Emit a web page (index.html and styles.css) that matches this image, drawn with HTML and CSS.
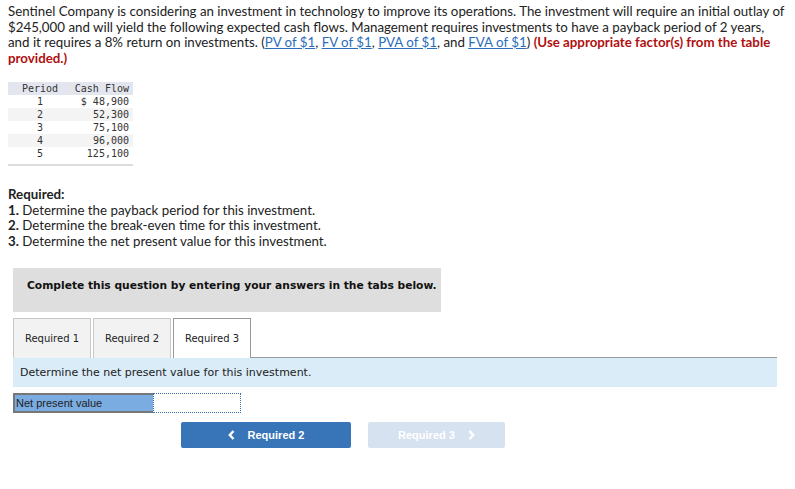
FILE: index.html
```html
<!DOCTYPE html>
<html>
<head>
<meta charset="utf-8">
<link rel="stylesheet" href="styles.css">
</head>
<body>
<div class="page">
  <p class="intro">Sentinel Company is considering an investment in technology to improve its operations. The investment will require an initial outlay of<br>$245,000 and will yield the following expected cash flows. Management requires investments to have a payback period of 2 years,<br>and it requires a 8% return on investments. (<a href="#">PV of $1</a>, <a href="#">FV of $1</a>, <a href="#">PVA of $1</a>, and <a href="#">FVA of $1</a>) <strong class="red">(Use appropriate factor(s) from the table<br>provided.)</strong></p>

  <table class="cf">
    <thead>
      <tr><th class="per">Period</th><th class="amt">Cash Flow</th></tr>
    </thead>
    <tbody>
      <tr><td class="per">1</td><td class="amt">$ 48,900</td></tr>
      <tr class="alt"><td class="per">2</td><td class="amt">52,300</td></tr>
      <tr><td class="per">3</td><td class="amt">75,100</td></tr>
      <tr class="alt"><td class="per">4</td><td class="amt">96,000</td></tr>
      <tr><td class="per">5</td><td class="amt">125,100</td></tr>
    </tbody>
  </table>

  <div class="req">
    <div class="req-title">Required:</div>
    <div><b>1.</b> Determine the payback period for this investment.</div>
    <div><b>2.</b> Determine the break-even time for this investment.</div>
    <div><b>3.</b> Determine the net present value for this investment.</div>
  </div>

  <div class="notice">Complete this question by entering your answers in the tabs below.</div>

  <div class="tabs">
    <div class="tab">Required 1</div>
    <div class="tab">Required 2</div>
    <div class="tab active">Required 3</div>
    <div class="tab-fill"></div>
  </div>
  <div class="prompt">Determine the net present value for this investment.</div>

  <div class="answer">
    <div class="label">Net present value</div>
    <div class="input"></div>
  </div>

  <div class="nav">
    <button class="btn prev"><svg class="chev left" width="7" height="10" viewBox="0 0 7 10"><polyline points="5.5,1 1.8,5 5.5,9" fill="none" stroke="#fff" stroke-width="2.4"/></svg>Required 2</button>
    <button class="btn next">Required 3<svg class="chev right" width="7" height="10" viewBox="0 0 7 10"><polyline points="1.5,1 5.2,5 1.5,9" fill="none" stroke="#fff" stroke-width="2.4"/></svg></button>
  </div>
</div>
</body>
</html>
```

FILE: styles.css
```css
html, body {
  margin: 0;
  padding: 0;
  background: #fff;
}
.page {
  padding: 4px 8px 0 8px;
  font-family: "Lato", "Liberation Sans", sans-serif;
  color: #222;
}
.intro {
  margin: 0;
  font-size: 13.3px;
  line-height: 15.5px;
}
.intro a {
  color: #2a6ebb;
  text-decoration: underline;
}
.red {
  color: #b01010;
  font-weight: 700;
}
.cf {
  margin-top: 16px;
  border-collapse: collapse;
  font-family: "DejaVu Sans Mono", "Liberation Mono", monospace;
  font-size: 10px;
  color: #333;
  border-bottom: 2px solid #ddd;
}
.cf th {
  background: #e3e6ee;
  font-weight: normal;
  height: 13px;
  padding: 0;
  line-height: 13px;
}
.cf td {
  height: 13px;
  padding: 0;
  line-height: 13px;
}
.cf tbody tr:last-child td {
  padding-bottom: 4px;
}
.cf .per {
  text-align: center;
  width: 56px;
  padding-left: 4px;
}
.cf .amt {
  text-align: right;
  width: 61px;
  padding-right: 4px;
}
.cf .alt td {
  background: #f4f4f4;
}
.req {
  margin-top: 21px;
  font-size: 13.3px;
  line-height: 15.5px;
}
.req-title {
  font-weight: 700;
}
.notice {
  margin: 19px 0 0 5px;
  width: 428px;
  height: 44px;
  box-sizing: border-box;
  padding: 11px 0 0 14px;
  background: #dedede;
  font-family: "DejaVu Sans", Verdana, sans-serif;
  font-weight: 700;
  font-size: 10.7px;
  white-space: nowrap;
  color: #111;
}
.tabs {
  margin: 6px 0 0 5px;
  display: flex;
  align-items: flex-end;
  width: 764px;
}
.tab {
  width: 76px;
  height: 39px;
  box-sizing: content-box;
  border: 1px solid #c8c8c8;
  border-bottom: none;
  background: #f2f2f2;
  margin-right: 2px;
  display: flex;
  align-items: center;
  justify-content: center;
  font-family: "DejaVu Sans", Verdana, sans-serif;
  font-size: 10px;
  color: #222;
}
.tab.active {
  background: #fff;
  border-color: #999;
  margin-right: 0;
}
.tab-fill {
  flex: 1;
  border-bottom: 1px solid #999;
}
.prompt {
  margin-left: 5px;
  width: 764px;
  height: 29px;
  box-sizing: border-box;
  padding-left: 7px;
  background: #d9ecf8;
  display: flex;
  align-items: center;
  font-family: "DejaVu Sans", Verdana, sans-serif;
  font-size: 11px;
  color: #222;
}
.answer {
  margin: 6px 0 0 5px;
  display: flex;
  height: 20px;
}
.label {
  width: 140px;
  box-sizing: border-box;
  border: 2px solid #777;
  border-right: none;
  background: #7aace2;
  font-family: "Liberation Sans", Arial, sans-serif;
  font-size: 11px;
  line-height: 16px;
  padding-left: 1px;
  color: #222;
}
.input {
  width: 88px;
  box-sizing: border-box;
  border: 1px dotted #3a6ea8;
  background: #fff;
}
.nav {
  margin-top: 9px;
  display: flex;
  padding-left: 173px;
}
.btn {
  height: 26px;
  border: none;
  border-radius: 2px;
  font-family: "Liberation Sans", Arial, sans-serif;
  font-weight: 700;
  font-size: 11px;
  color: #fff;
  display: flex;
  align-items: center;
  justify-content: center;
  padding: 0;
}
.btn.prev {
  width: 170px;
  background: #3874b8;
}
.btn.next {
  width: 137px;
  margin-left: 17px;
  background: #d7e2f0;
}
.chev.left {
  margin-right: 13px;
}
.chev.right {
  margin-left: 13px;
}
```
